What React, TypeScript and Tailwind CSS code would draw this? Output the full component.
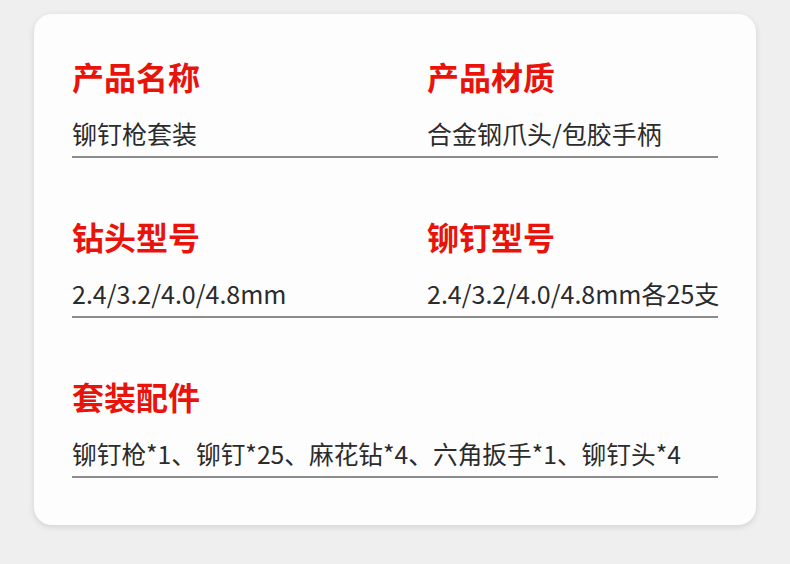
const rows = [
  [
    { title: "产品名称", value: "铆钉枪套装" },
    { title: "产品材质", value: "合金钢爪头/包胶手柄" },
  ],
  [
    { title: "钻头型号", value: "2.4/3.2/4.0/4.8mm" },
    { title: "铆钉型号", value: "2.4/3.2/4.0/4.8mm各25支" },
  ],
];

function Cell({ title, value, small }: { title: string; value: string; small?: boolean }) {
  return (
    <div className="flex flex-col">
      <h3 className="text-[32px] leading-[40px] font-bold text-[#e8140c]">{title}</h3>
      <p
        className={
          "mt-[21px] pb-[7px] leading-[32px] text-[#2b2b2b] whitespace-nowrap " +
          (small ? "text-[24.7px]" : "text-[25px]")
        }
      >
        {value}
      </p>
    </div>
  );
}

export default function App() {
  return (
    <div
      className="min-h-screen bg-[#efefef] pt-[14px] px-[34px]"
      style={{ fontFamily: '"Noto Sans CJK SC", "Noto Sans", sans-serif' }}
    >
      <div className="bg-[#fdfdfd] rounded-[18px] shadow-[0_2px_6px_rgba(0,0,0,0.12)] w-[722px] h-[511px] px-[38px] pt-[42px]">
        <div className="flex flex-col gap-[58px]">
          {rows.map((row, i) => (
            <div key={i} className="grid grid-cols-[355px_1fr] border-b-2 border-[#8c8c8c]">
              {row.map((c) => (
                <Cell key={c.title} title={c.title} value={c.value} />
              ))}
            </div>
          ))}
          <div className="border-b-2 border-[#8c8c8c]">
            <Cell title="套装配件" value="铆钉枪*1、铆钉*25、麻花钻*4、六角扳手*1、铆钉头*4" small />
          </div>
        </div>
      </div>
    </div>
  );
}
